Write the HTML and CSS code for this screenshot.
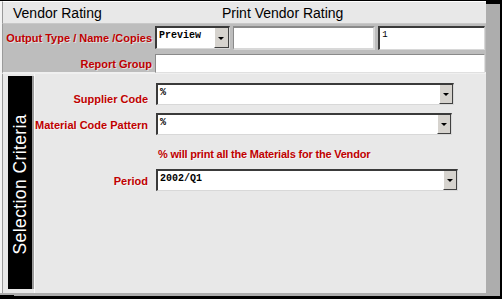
FILE: index.html
```html
<!DOCTYPE html>
<html lang="en">
<head>
  <meta charset="UTF-8">
  <title>Print Vendor Rating</title>
  <link rel="stylesheet" href="styles.css">
</head>
<body>
  <div class="screen">
    <div class="window">
      <!-- Title bar -->
      <div class="titlebar">
        <span class="app-name">Vendor Rating</span>
        <span class="form-title">Print Vendor Rating</span>
      </div>

      <!-- Output options -->
      <div class="output">
        <label class="label">Output Type / Name /Copies</label>
        <div class="output-inputs">
          <div class="combo combo-type"><span class="value">Preview</span><span class="drop"></span></div>
          <div class="field field-name"></div>
          <div class="field field-copies"><span class="value">1</span></div>
        </div>
        <label class="label">Report Group</label>
        <div class="field field-group"></div>
      </div>

      <!-- Selection criteria -->
      <div class="criteria">
        <div class="side"><span>Selection Criteria</span></div>
        <div class="fields">
          <label class="label">Supplier Code</label>
          <div class="combo combo-supplier"><span class="value">%</span><span class="drop"></span></div>

          <label class="label">Material Code Pattern</label>
          <div class="combo combo-material"><span class="value">%</span><span class="drop"></span></div>

          <span></span>
          <p class="note">% will print all the Materials for the Vendor</p>

          <label class="label">Period</label>
          <div class="combo combo-period"><span class="value">2002/Q1</span><span class="drop"></span></div>
        </div>
      </div>
    </div>
  </div>
</body>
</html>
```

FILE: styles.css
```css
/* General Styles */
body {
  margin: 0;
  background: #000;
  font-family: 'Liberation Sans', Arial, sans-serif;
}
.screen {
  width: 502px;
  height: 299px;
  padding-top: 1px;
  box-sizing: border-box;
  overflow: hidden;
}
.window {
  width: 486px;
  height: 292px;
  box-sizing: border-box;
  border-left: 2px solid #f4f4f4;
  background: #e8e8e8;
  box-shadow: 14px 3px 0 #adadad, 0 2px 0 #adadad;
  display: flex;
  flex-direction: column;
}

/* Title bar */
.titlebar {
  height: 23px;
  box-sizing: border-box;
  display: flex;
  align-items: center;
  padding-left: 10px;
  border-left: 1px solid #9a9a9a;
  border-top: 1px solid #fff;
  border-bottom: 1px solid #c8c8c8;
  font-size: 14px;
  color: #000;
}
.app-name {
  width: 209px;
}

/* Shared labels and inputs */
.label {
  color: #c00000;
  font-weight: bold;
  font-size: 11px;
  text-align: right;
  text-shadow: 1px 1px 0 rgba(255, 255, 255, 0.55);
  white-space: nowrap;
}
.field,
.combo {
  box-sizing: border-box;
  background: #fff;
  border-style: solid;
  border-width: 2px 1px 1px 2px;
  border-color: #3a3a3a #d8d8d8 #d8d8d8 #3a3a3a;
  display: flex;
  align-items: flex-start;
}
.value {
  flex: 1;
  padding: 2px 0 0 2px;
  font-family: 'Liberation Mono', 'Courier New', monospace;
  font-weight: bold;
  font-size: 10px;
  color: #000;
}
.drop {
  align-self: stretch;
  width: 12px;
  background: #d6d3ce;
  border-left: 1px solid #fff;
  border-right: 1px solid #404040;
  border-bottom: 1px solid #404040;
  position: relative;
}
.drop::after {
  content: '';
  position: absolute;
  left: 3px;
  top: 50%;
  margin-top: -1px;
  border-left: 3px solid transparent;
  border-right: 3px solid transparent;
  border-top: 3px solid #000;
}

/* Output options */
.output {
  height: 50px;
  background: #bdbdbd;
  border-left: 1px solid #9a9a9a;
  border-bottom: 2px solid #f0f0f0;
  box-sizing: border-box;
  display: grid;
  grid-template-columns: 149px 330px;
  grid-template-rows: 24px 19px;
  column-gap: 3px;
  row-gap: 4px;
  padding-top: 2px;
  align-items: center;
}
.output-inputs {
  display: flex;
  gap: 3px;
  height: 24px;
}
.combo-type {
  width: 75px;
  height: 23px;
}
.combo-type .drop {
  width: 13px;
}
.field-name {
  width: 143px;
  height: 24px;
  border-width: 2px 2px 2px 1px;
  border-color: #8a8a8a #d8d8d8 #d8d8d8 #8a8a8a;
}
.field-copies {
  width: 107px;
  height: 24px;
}
.field-copies .value {
  font-weight: normal;
  font-size: 9px;
}
.field-group {
  width: 330px;
  height: 19px;
  border-width: 1px;
  border-color: #8a8a8a #e0e0e0 #e0e0e0 #8a8a8a;
}

/* Selection criteria */
.criteria {
  flex: 1;
  display: flex;
  padding-left: 5px;
  border-left: 1px solid #9a9a9a;
}
.side {
  width: 24px;
  margin: 2px 0 4px;
  background: #000;
  border-right: 2px solid #9a9a9a;
  display: flex;
  align-items: flex-end;
  justify-content: center;
  overflow: hidden;
}
.side span {
  writing-mode: vertical-rl;
  transform: rotate(180deg);
  color: #fff;
  font-size: 17.5px;
  letter-spacing: 0.4px;
  white-space: nowrap;
  padding-top: 35px;
}
.fields {
  flex: 1;
  border-left: 1px solid #f8f8f8;
  display: grid;
  grid-template-columns: 113px auto;
  grid-auto-rows: min-content;
  column-gap: 8px;
  align-items: center;
  padding-top: 9px;
}
.fields .label {
  padding-top: 2px;
}
.combo-supplier {
  width: 298px;
  height: 22px;
  margin-bottom: 8px;
}
.combo-material {
  width: 296px;
  height: 22px;
}
.combo-period {
  width: 302px;
  height: 22px;
}
.note {
  margin: 13px 0 9px 2px;
  color: #c00000;
  font-weight: bold;
  font-size: 11px;
  letter-spacing: -0.2px;
  text-shadow: 1px 1px 0 rgba(255, 255, 255, 0.55);
}
```
